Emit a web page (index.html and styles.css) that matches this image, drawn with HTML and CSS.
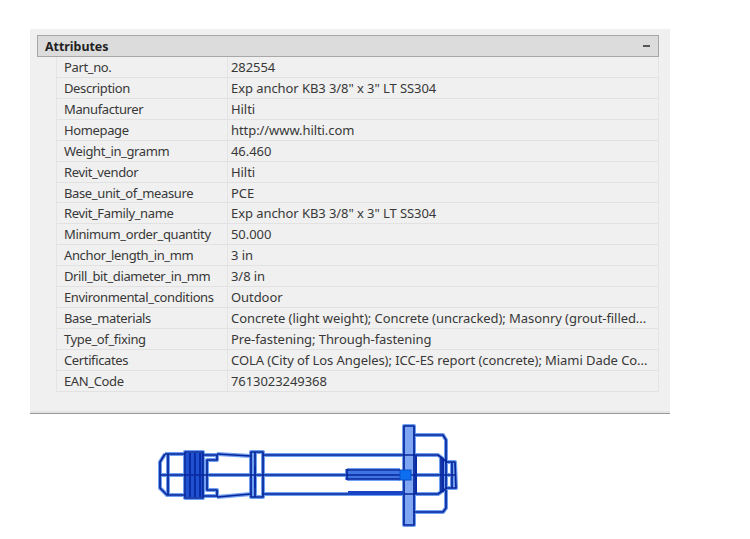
FILE: index.html
```html
<!DOCTYPE html>
<html lang="en">
<head>
<meta charset="utf-8">
<title>Attributes</title>
<link rel="stylesheet" href="styles.css">
</head>
<body>
<section class="panel">
  <header class="panel-head"><span class="panel-title">Attributes</span><span class="collapse" aria-label="Collapse"></span></header>
  <div class="rows">
    <div class="row"><div class="key">Part_no.</div><div class="val">282554</div></div>
    <div class="row"><div class="key">Description</div><div class="val">Exp anchor KB3 3/8" x 3" LT SS304</div></div>
    <div class="row"><div class="key">Manufacturer</div><div class="val">Hilti</div></div>
    <div class="row"><div class="key">Homepage</div><div class="val">http://www.hilti.com</div></div>
    <div class="row"><div class="key">Weight_in_gramm</div><div class="val">46.460</div></div>
    <div class="row"><div class="key">Revit_vendor</div><div class="val">Hilti</div></div>
    <div class="row"><div class="key">Base_unit_of_measure</div><div class="val">PCE</div></div>
    <div class="row"><div class="key">Revit_Family_name</div><div class="val">Exp anchor KB3 3/8" x 3" LT SS304</div></div>
    <div class="row"><div class="key">Minimum_order_quantity</div><div class="val">50.000</div></div>
    <div class="row"><div class="key">Anchor_length_in_mm</div><div class="val">3 in</div></div>
    <div class="row"><div class="key">Drill_bit_diameter_in_mm</div><div class="val">3/8 in</div></div>
    <div class="row"><div class="key">Environmental_conditions</div><div class="val">Outdoor</div></div>
    <div class="row"><div class="key">Base_materials</div><div class="val">Concrete (light weight); Concrete (uncracked); Masonry (grout-filled...</div></div>
    <div class="row"><div class="key">Type_of_fixing</div><div class="val">Pre-fastening; Through-fastening</div></div>
    <div class="row"><div class="key">Certificates</div><div class="val">COLA (City of Los Angeles); ICC-ES report (concrete); Miami Dade Co...</div></div>
    <div class="row"><div class="key">EAN_Code</div><div class="val">7613023249368</div></div>
  </div>
</section>
<svg class="drawing" viewBox="150 420 320 110" width="320" height="110" role="img" aria-label="Anchor drawing">
  <defs>
    <g id="shape">
      <path d="M165 454 L160 462 V488 L167 495 H185"/>
      <path d="M165 454 H185 M168 454 V495 M160 475 H404"/>
      <path d="M185 452 H203 V498 H185 Z"/>
      <path d="M203 455 H217 V460 H207 V490 H217 V496 H203"/>
      <path d="M217 454 L251 456 M217 497 L251 494"/>
      <path d="M251 452 H263 V497 H251 Z M255 452 V497"/>
      <path d="M263 455 H438 L447 462 H455 L456 488 H447 L438 494 H263"/>
      <path d="M404 426 H414 V525 H404 Z"/>
      <path d="M414 435 H443 L446 440 V463 M446 490 V508 L443 512 H414"/>
      <path d="M441 457 V492 M446 462 V488 M411 475 H455"/>
      <path d="M347 470 H400 M347 479 H400 M347 469 V480"/>
      <path d="M452 462 V488"/>
    </g>
  </defs>
  <use href="#shape" class="halo"/>
  <rect class="band" x="186" y="453" width="17" height="44"/>
  <rect class="tint" x="348" y="471" width="52" height="8"/>
  <rect class="pale" x="405" y="427" width="8" height="97"/>
  <use href="#shape" class="ink"/>
  <path class="mass" d="M190 453 V497 M195 453 V497 M200 453 V497"/>
  <path class="mass" d="M255 466 V488 M416 455 V494 M443 458 V492"/>
  <path class="thread" d="M348 493 H404"/>
  <rect class="node" x="400" y="470" width="11" height="10"/>
</svg>
</body>
</html>
```
FILE: styles.css
```css
html, body {
  margin: 0;
  padding: 0;
  background: #fff;
}
body {
  font-family: "Noto Sans", "Open Sans", sans-serif;
  font-size: 13px;
  color: #383838;
}
.panel {
  box-sizing: border-box;
  width: 640px;
  height: 385px;
  margin: 29px 0 0 30px;
  padding: 6px 11px 0 7px;
  background: #f0f0f0;
  border-bottom: 1px solid #999;
  box-shadow: inset 0 -3px 0 -1px #e4e4e4;
}
.panel-head {
  box-sizing: border-box;
  height: 22px;
  display: flex;
  align-items: center;
  justify-content: space-between;
  padding: 0 8px 0 7px;
  background: #dcdcdc;
  border: 1px solid #a8a8a8;
}
.panel-title {
  font-size: 12.4px;
  font-weight: 700;
  color: #222;
}
.collapse {
  width: 7px;
  height: 2px;
  background: #555;
}
.rows {
  margin-left: 19px;
  border-left: 1px solid #e4e4e4;
  border-right: 1px solid #e4e4e4;
}
.row {
  box-sizing: border-box;
  height: 20.93px;
  display: grid;
  grid-template-columns: 171px 1fr;
  border-bottom: 1px solid #e2e2e2;
  line-height: 20px;
}
.key {
  padding-left: 7px;
  border-right: 1px solid #e4e4e4;
  letter-spacing: -0.37px;
  white-space: nowrap;
  overflow: hidden;
}
.val {
  padding-left: 3px;
  letter-spacing: -0.07px;
  white-space: nowrap;
  overflow: hidden;
}
.drawing {
  display: block;
  margin: 6px 0 0 150px;
  filter: blur(0.4px);
}
.halo, .ink, .mass, .thread {
  fill: none;
  stroke-linejoin: round;
}
.halo {
  stroke: #6f9ff0;
  stroke-width: 4;
}
.ink {
  stroke: #08269a;
  stroke-width: 1.7;
}
.band {
  fill: #1f52d0;
}
.tint {
  fill: #3f74e4;
}
.pale {
  fill: #7ea6f2;
}
.mass {
  stroke: #0a2ca6;
  stroke-width: 2;
}
.thread {
  stroke: #1745c4;
  stroke-width: 4;
}
.node {
  fill: #0b6ff0;
  stroke: #0a4cc8;
  stroke-width: 1;
}
```
